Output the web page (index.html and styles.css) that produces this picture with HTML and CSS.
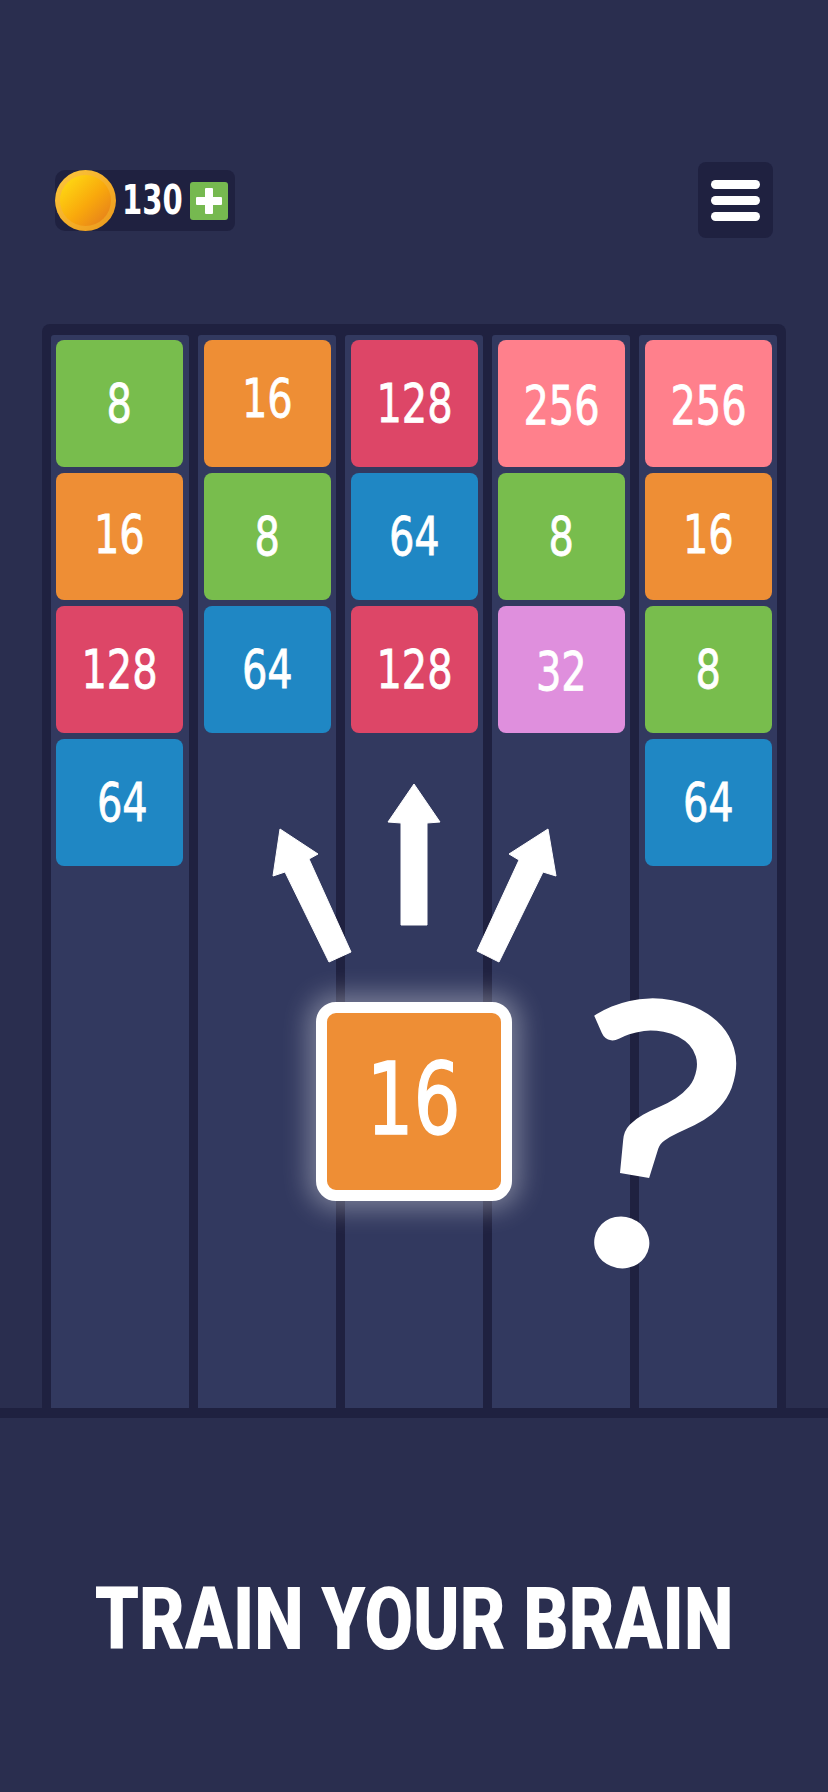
FILE: index.html
```html
<!DOCTYPE html>
<html lang="en">
<head>
  <meta charset="UTF-8" />
  <meta name="viewport" content="width=device-width, initial-scale=1.0" />
  <title>Train Your Brain</title>
  <link rel="stylesheet" href="styles.css">
</head>
<body>
  <!-- Coins and menu -->
  <header class="topbar">
    <div class="coins">
      <span class="coin"></span>
      <span class="coin-count">130</span>
      <button class="coin-add" type="button" aria-label="Add coins"></button>
    </div>
    <button class="menu" type="button" aria-label="Menu">
      <span></span>
      <span></span>
      <span></span>
    </button>
  </header>

  <!-- Game board -->
  <main class="board">
    <div class="column">
      <div class="tile green"><span>8</span></div>
      <div class="tile orange nudge-up"><span>16</span></div>
      <div class="tile red"><span>128</span></div>
      <div class="tile blue nudge-right"><span>64</span></div>
    </div>
    <div class="column">
      <div class="tile orange nudge-up-more"><span>16</span></div>
      <div class="tile green"><span>8</span></div>
      <div class="tile blue"><span>64</span></div>
    </div>
    <div class="column">
      <div class="tile red"><span>128</span></div>
      <div class="tile blue"><span>64</span></div>
      <div class="tile red"><span>128</span></div>
    </div>
    <div class="column">
      <div class="tile pink nudge-down"><span>256</span></div>
      <div class="tile green"><span>8</span></div>
      <div class="tile purple nudge-down"><span>32</span></div>
    </div>
    <div class="column">
      <div class="tile pink nudge-down"><span>256</span></div>
      <div class="tile orange nudge-up"><span>16</span></div>
      <div class="tile green"><span>8</span></div>
      <div class="tile blue"><span>64</span></div>
    </div>

    <!-- Overlay: arrows, next tile, question mark -->
    <svg class="arrows" viewBox="0 0 828 1792" aria-hidden="true">
      <path d="M414 784 L440 822 L427 823 L427 925 L401 925 L401 823 L388 822 Z" />
      <path d="M280 829 L318 854 L309 859 L351 952 L329 962 L285 872 L273 876 Z" />
      <path d="M548 829 L556 876 L543 872 L499 962 L477 951 L519 860 L509 854 Z" />
    </svg>
    <div class="next-tile"><span>16</span></div>
    <div class="question">?</div>
  </main>

  <div class="floor"></div>

  <footer class="caption">
    <h1>TRAIN YOUR BRAIN</h1>
  </footer>
</body>
</html>
```

FILE: styles.css
```css
/* Page */
body {
  margin: 0;
  width: 828px;
  height: 1792px;
  overflow: hidden;
  background-color: #2a2e4f;
  color: #fff;
  font-family: "DejaVu Sans", sans-serif;
}

button {
  border: none;
  padding: 0;
}

/* Top bar */
.topbar {
  display: flex;
  justify-content: space-between;
  align-items: flex-start;
  height: 162px;
  padding: 162px 55px 0 55px;
}

.coins {
  display: flex;
  align-items: center;
  width: 180px;
  height: 61px;
  margin-top: 8px;
  background-color: #1f2140;
  border-radius: 10px 8px 8px 10px;
}

.coin {
  box-sizing: border-box;
  width: 61px;
  height: 61px;
  flex-shrink: 0;
  border: 5px solid transparent;
  border-radius: 50%;
  background:
    linear-gradient(135deg, #ffe214, #f9a80c 55%, #e2781f) padding-box,
    linear-gradient(135deg, #fbc73f, #f4ac26 60%, #e9971d) border-box;
}

.coin-count {
  width: 68px;
  margin-left: 6px;
  font-size: 41px;
  font-weight: bold;
  line-height: 61px;
  transform: scaleX(0.71);
  transform-origin: left center;
}

.coin-add {
  position: relative;
  width: 38px;
  height: 38px;
  background-color: #76b950;
  border-radius: 3px;
}

.coin-add::before,
.coin-add::after {
  content: "";
  position: absolute;
  background-color: #fff;
  border-radius: 1px;
}

.coin-add::before {
  left: 6px;
  top: 15px;
  width: 26px;
  height: 8px;
}

.coin-add::after {
  left: 15px;
  top: 6px;
  width: 8px;
  height: 26px;
}

.menu {
  display: flex;
  flex-direction: column;
  align-items: center;
  justify-content: center;
  gap: 7px;
  width: 75px;
  height: 76px;
  background-color: #1f2140;
  border-radius: 8px;
}

.menu span {
  width: 49px;
  height: 9px;
  background-color: #fff;
  border-radius: 5px;
}

/* Board */
.board {
  display: grid;
  grid-template-columns: repeat(5, 1fr);
  gap: 8.5px;
  box-sizing: border-box;
  width: 744px;
  height: 1084px;
  margin: 0 42px;
  padding: 11px 9px 0;
  background-color: #1f2140;
  border-radius: 8px 8px 0 0;
}

.column {
  display: flex;
  flex-direction: column;
  align-items: center;
  gap: 6px;
  padding-top: 5px;
  background-color: #32395f;
  border-radius: 3px 3px 0 0;
}

.column:first-child {
  padding-right: 2px;
}

.column:nth-child(n+3) {
  padding-left: 1.5px;
}

.tile {
  display: flex;
  align-items: center;
  justify-content: center;
  box-sizing: border-box;
  width: 127px;
  height: 127px;
  flex-shrink: 0;
  border-radius: 8px;
  font-size: 54px;
  -webkit-text-stroke: 0.8px #fff;
}

.tile span,
.next-tile span {
  display: block;
  transform: scaleX(0.74);
}

.green { background-color: #78bd4d; }
.orange { background-color: #ee8e35; }
.red { background-color: #dd4667; }
.blue { background-color: #1f87c4; }
.pink { background-color: #ff808c; }
.purple { background-color: #df8fdd; }

/* Hand placed digits in the original art */
.nudge-up { padding-bottom: 4px; }
.nudge-up-more { padding-bottom: 10px; }
.nudge-down { padding-top: 3px; }
.nudge-right { padding-left: 7px; }

/* Overlay */
.arrows {
  position: absolute;
  left: 0;
  top: 0;
  width: 828px;
  height: 1792px;
  fill: #fff;
  stroke: #fff;
  stroke-width: 1;
  stroke-linejoin: round;
}

.next-tile {
  position: absolute;
  left: 316px;
  top: 1002px;
  display: flex;
  align-items: center;
  justify-content: center;
  box-sizing: border-box;
  width: 196px;
  height: 199px;
  padding-bottom: 4px;
  border: 11px solid #fff;
  border-radius: 20px;
  background-color: #ee8e35;
  box-shadow: 0 0 26px 8px rgba(255, 255, 255, 0.35);
  font-size: 100px;
  -webkit-text-stroke: 1.5px #fff;
}

.question {
  position: absolute;
  left: 570px;
  top: 943px;
  font-family: "Lato", sans-serif;
  font-size: 365px;
  line-height: 1;
  -webkit-text-stroke: 6px #fff;
  transform: rotate(10deg) scaleX(1.07);
}

/* Bottom */
.floor {
  height: 10px;
  background-color: #1f2140;
}

.caption {
  text-align: center;
}

.caption h1 {
  margin: 157px 0 0;
  font-family: "Roboto", sans-serif;
  font-size: 88px;
  font-weight: 900;
  line-height: 88px;
  transform: scaleX(0.8);
}
```
